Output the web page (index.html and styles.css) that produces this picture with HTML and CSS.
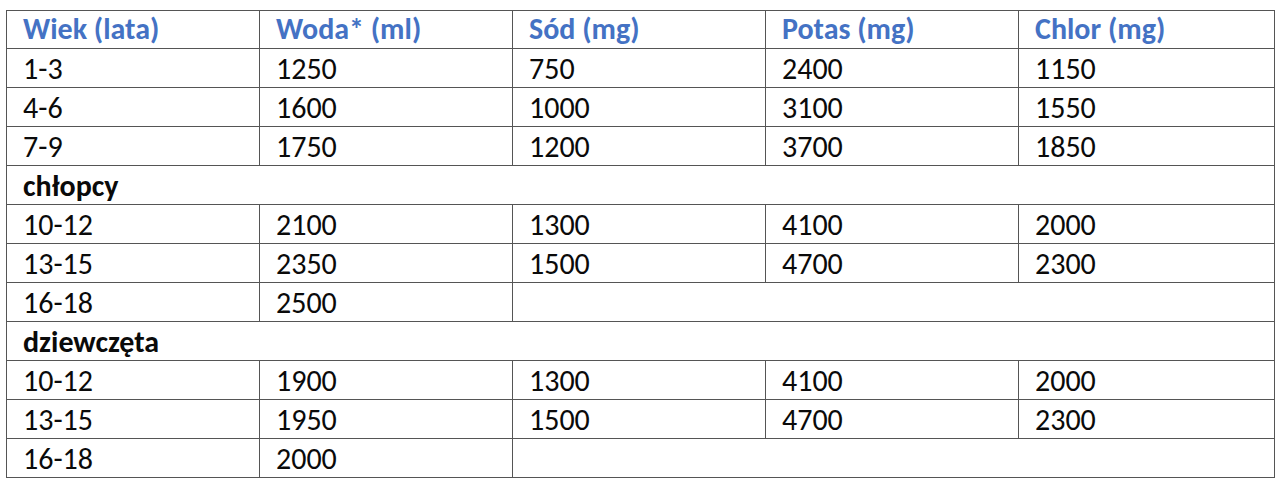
FILE: index.html
```html
<!DOCTYPE html>
<html lang="pl">
<head>
<meta charset="utf-8">
<link rel="stylesheet" href="styles.css">
</head>
<body>
<table class="tbl">
  <colgroup><col class="c"><col class="c"><col class="c"><col class="c"><col class="c5"></colgroup>
  <tr class="head"><th>Wiek (lata)</th><th>Woda* (ml)</th><th>Sód (mg)</th><th>Potas (mg)</th><th>Chlor (mg)</th></tr>
  <tr><td>1-3</td><td>1250</td><td>750</td><td>2400</td><td>1150</td></tr>
  <tr><td>4-6</td><td>1600</td><td>1000</td><td>3100</td><td>1550</td></tr>
  <tr><td>7-9</td><td>1750</td><td>1200</td><td>3700</td><td>1850</td></tr>
  <tr><td class="group" colspan="5">chłopcy</td></tr>
  <tr><td>10-12</td><td>2100</td><td>1300</td><td>4100</td><td>2000</td></tr>
  <tr><td>13-15</td><td>2350</td><td>1500</td><td>4700</td><td>2300</td></tr>
  <tr><td>16-18</td><td>2500</td><td colspan="3"></td></tr>
  <tr><td class="group" colspan="5">dziewczęta</td></tr>
  <tr><td>10-12</td><td>1900</td><td>1300</td><td>4100</td><td>2000</td></tr>
  <tr><td>13-15</td><td>1950</td><td>1500</td><td>4700</td><td>2300</td></tr>
  <tr><td>16-18</td><td>2000</td><td colspan="3"></td></tr>
</table>
</body>
</html>
```
FILE: styles.css
```css
html, body {
  margin: 0;
  padding: 0;
  background: #ffffff;
}
body {
  padding: 10px 0 0 6px;
  font-family: Carlito, "Open Sans", "Liberation Sans", sans-serif;
  color: #0a0a0a;
}
.tbl {
  border-collapse: collapse;
  table-layout: fixed;
  width: 1268px;
}
.c { width: 253px; }
.c5 { width: 256px; }
.tbl th, .tbl td {
  border: 1px solid #555555;
  padding: 5px 0 3px 16px;
  text-align: left;
  font-size: 30px;
  line-height: 30px;
  height: 30px;
  vertical-align: middle;
}
.head th {
  color: #4472c4;
  font-weight: bold;
  padding-top: 3px;
  padding-bottom: 4px;
}
.group {
  font-weight: bold;
}
```
